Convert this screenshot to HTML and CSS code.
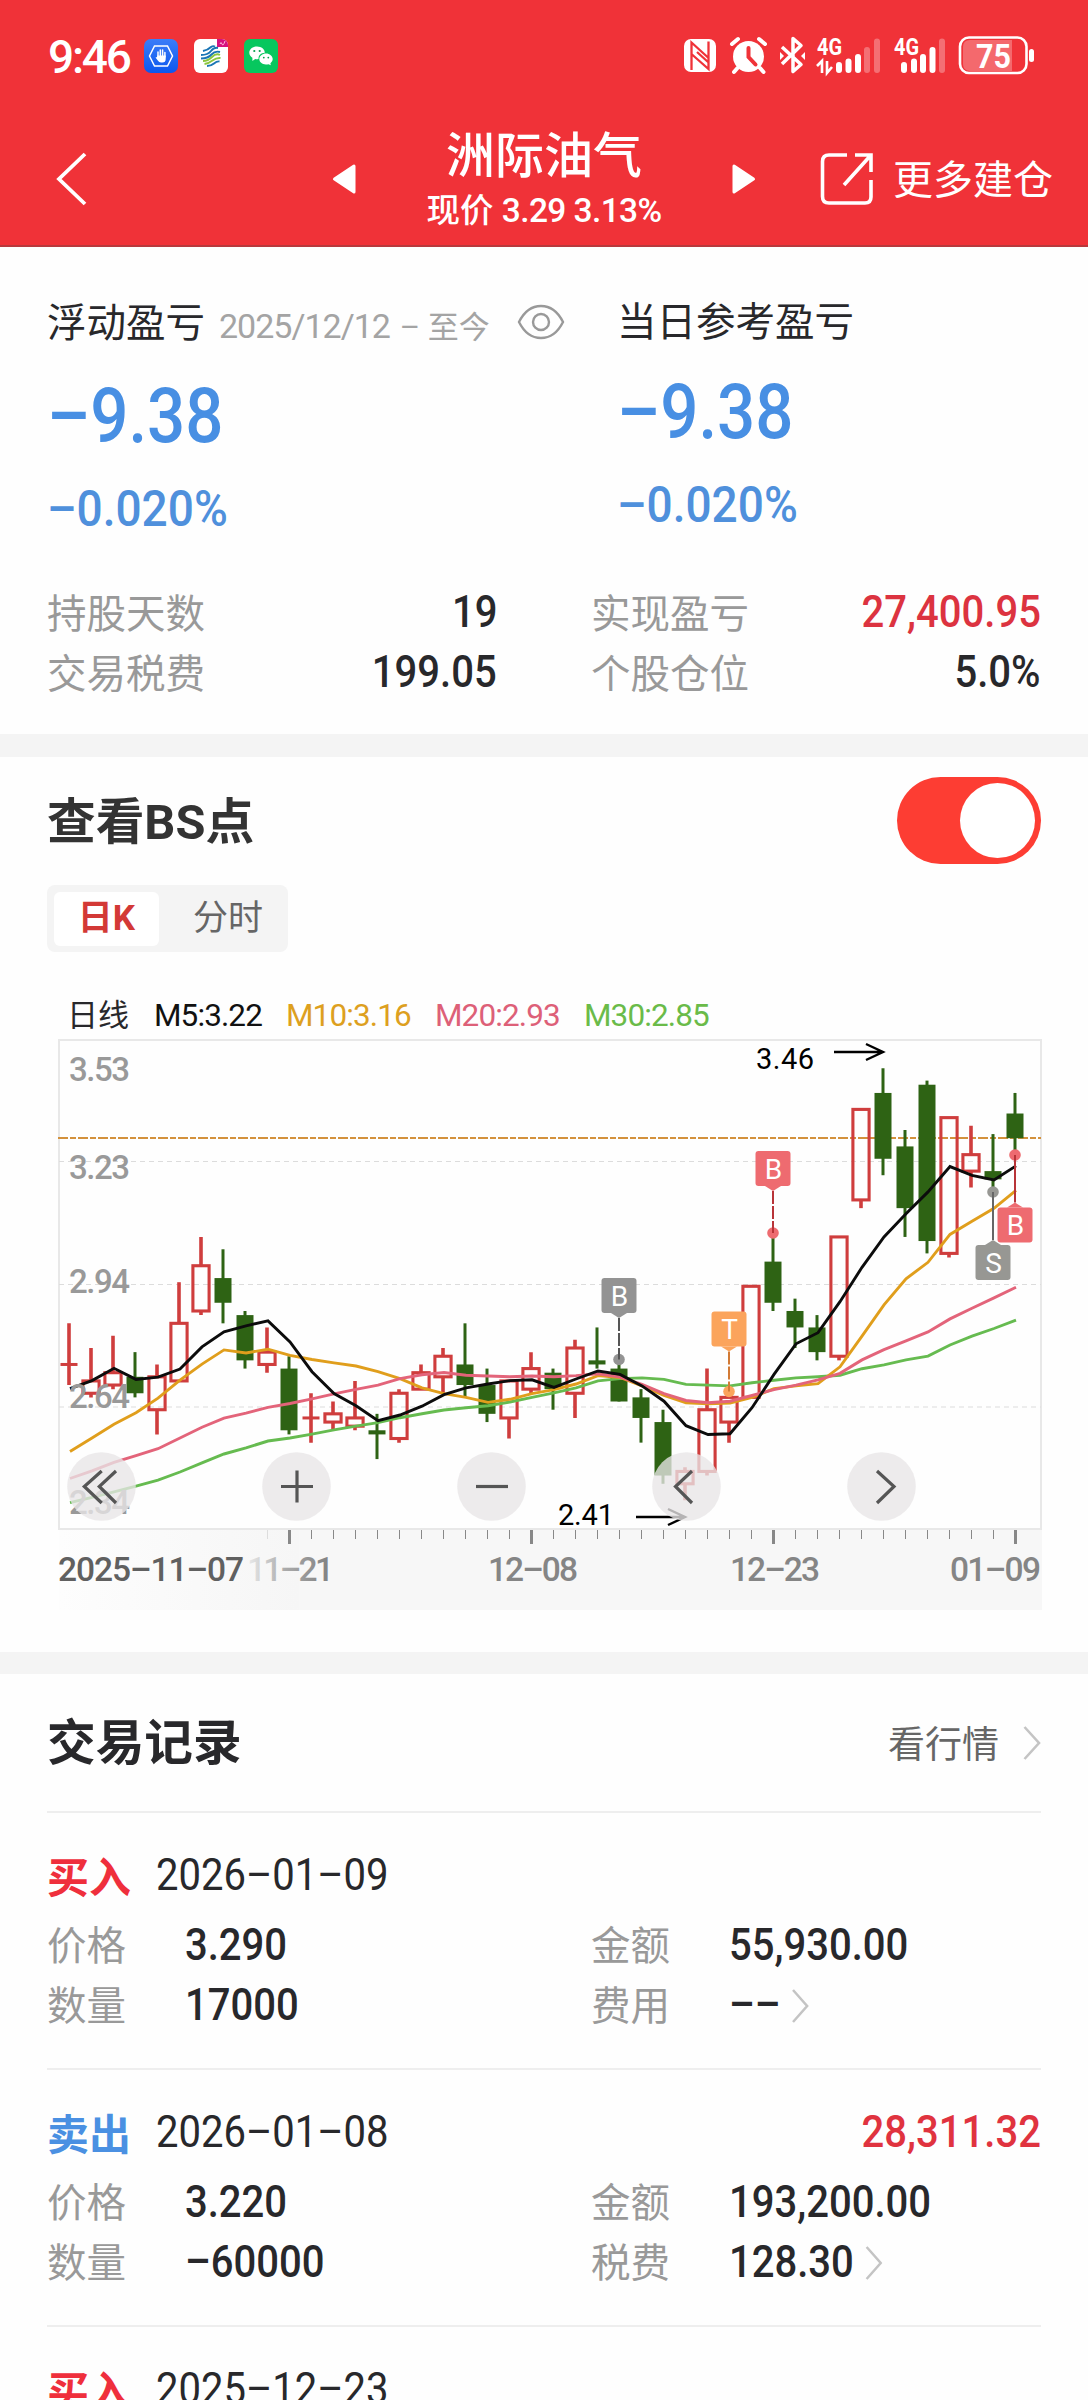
FILE: index.html
```html
<!DOCTYPE html>
<html lang="zh-CN">
<head>
<meta charset="utf-8">
<title>洲际油气</title>
<link rel="stylesheet" href="styles.css">
</head>
<body>
<header class="top">
  <div class="status">
    <span class="clock">9:46</span>
    <div class="apps">
      <svg width="34" height="34" viewBox="0 0 34 34"><defs><linearGradient id="gb" x1="0" y1="0" x2="0" y2="1"><stop offset="0" stop-color="#3c7df8"/><stop offset="1" stop-color="#0b57ee"/></linearGradient></defs><rect width="34" height="34" rx="7" fill="url(#gb)"/><path d="M10.5 7h13l5 10-5 10h-13l-5-10z" fill="none" stroke="#fff" stroke-width="1.5"/><path d="M14 18v-5M16.300 17v-6M18.600 17v-6M20.900 18v-4.500" stroke="#fff" stroke-width="1.500" stroke-linecap="round"/><path d="M13.200 16.500h8.500v3.500q0 3.500-3.500 3.500h-1.200q-2 0-3.200-2l-2.300-3 1.700-.5z" fill="#fff"/></svg>
      <svg width="34" height="34" viewBox="0 0 34 34"><rect width="34" height="34" rx="6" fill="#fff"/><path d="M23 0h5a6 6 0 0 1 6 6v2H23z" fill="#d6127e"/><path d="M26 5q1-3 2 0t3-3" stroke="#fbd" fill="none"/><g fill="none" stroke-width="1.900"><path d="M7 16q7 0 10-4t7-3" stroke="#1a75b5"/><path d="M9 12q5-1 8-4 2-1.500 4-.5" stroke="#1a75b5"/><path d="M7 19.500q7 0 10.500-4T26 13" stroke="#1a75b5"/><path d="M9 22q5 0 9-4t8-2" stroke="#8cc63f"/><path d="M10.500 25q4-.5 8-3.500t8-2.500" stroke="#8cc63f"/><path d="M13 27q4 0 7-2.500t5.500-2" stroke="#1a75b5"/></g></svg>
      <svg width="34" height="34" viewBox="0 0 34 34"><rect width="34" height="34" rx="6" fill="#07c75e"/><path d="M13 7.500c4.500 0 7.800 2.800 7.800 6.300-4 .2-6.500 2.700-6.300 6.200q-1.500.3-3.300-.1L8.400 22v-3.200C6.500 17.600 5.300 15.800 5.300 13.800c0-3.500 3.300-6.300 7.700-6.300z" fill="#fff"/><path d="M22 14.600c3.700 0 6.700 2.500 6.700 5.500 0 1.700-.9 3.200-2.300 4.200l.4 2-2.300-1.100c-5 1.400-9.200-1.400-9.200-5.100 0-3 3-5.500 6.700-5.500z" fill="#fff"/><g fill="#07a04e"><circle cx="10.300" cy="12" r="1.100"/><circle cx="15.700" cy="12" r="1.100"/><circle cx="19.800" cy="18.600" r=".9"/><circle cx="24.300" cy="18.600" r=".9"/></g></svg>
    </div>
    <div class="signals">
      <svg width="356" height="42" viewBox="682 36 356 42">
        <rect x="684" y="40" width="32" height="33" rx="7" fill="#fff"/>
        <path d="M691.500 71V43.500l16.500 15M708.500 42.500V70L692 55.500M697 53l11 10" fill="none" stroke="#f03238" stroke-width="2.300"/>
        <circle cx="748.500" cy="57.500" r="15.500" fill="#fff"/>
        <path d="M732 45l6-5M765 45l-6-5M737.500 69l-3.500 4M760 69l3.500 4" stroke="#fff" stroke-width="4" stroke-linecap="round"/>
        <path d="M748.500 49v9l7 7.500" stroke="#f03238" stroke-width="4" fill="none" stroke-linecap="round"/>
        <path d="M782 48l19 17.500-8 7v-33l8 7L782 65" fill="none" stroke="#fff" stroke-width="3.500" stroke-linejoin="round"/>
        <path d="M780 53l4 4-4 4zM805 53l-4 4 4 4z" fill="#fff"/>
        <g class="net"><text x="817" y="56" textLength="25" lengthAdjust="spacingAndGlyphs">4G</text><text x="894" y="56" textLength="25" lengthAdjust="spacingAndGlyphs">4G</text></g>
        <path d="M817 67l5-5v12M827 62v12l5-6" fill="none" stroke="#fff" stroke-width="2.600"/>
        <g stroke="#fff" stroke-width="6" stroke-linecap="round">
          <path d="M839 66v5M848.500 62.500v8.500M858 58v13M904 66v5M914 62.500v8.500M923 58v13M932.500 51v20"/>
          <path d="M867 51v20M877 42.500v28.500M942 42.500v28.500" stroke-opacity=".3"/>
        </g>
        <rect x="960" y="38.500" width="66.500" height="35.500" rx="9" fill="none" stroke="#fff" stroke-width="2.600"/>
        <path d="M970 41h42v31h-42q-7 0-7-7V48q0-7 7-7z" fill="#fff" fill-opacity=".27"/>
        <rect x="1029" y="50" width="5" height="13" rx="2.500" fill="#fff"/>
        <text class="batt" x="976" y="69" textLength="35" lengthAdjust="spacingAndGlyphs">75</text>
      </svg>
    </div>
  </div>
  <nav class="bar">
    <svg class="back" width="34" height="56" viewBox="0 0 34 56"><path d="M31 3L5 28l26 25" fill="none" stroke="#fff" stroke-width="3.800"/></svg>
    <svg class="prev" width="24" height="32" viewBox="0 0 24 32"><path d="M22 3v26L2.500 16z" fill="#fff" stroke="#fff" stroke-width="3" stroke-linejoin="round"/></svg>
    <div class="title"><h1>洲际油气</h1><p>现价 <span>3.29 3.13%</span></p></div>
    <svg class="next" width="24" height="32" viewBox="0 0 24 32"><path d="M2 3v26l19.500-13z" fill="#fff" stroke="#fff" stroke-width="3" stroke-linejoin="round"/></svg>
    <div class="more">
      <svg width="54" height="54" viewBox="0 0 54 54"><path d="M27 3H9q-6.500 0-6.500 6.500v35Q2.500 51 9 51h36q6 0 6-6V28M35 3h16v17M51 3L24 33" fill="none" stroke="#fff" stroke-width="3.600"/></svg>
      <span>更多建仓</span>
    </div>
  </nav>
</header>

<section class="summary">
  <div class="pnl">
    <div class="col">
      <div class="cap"><span>浮动盈亏</span><small><span class="since">2025/12/12</span> – 至今</small>
        <svg width="48" height="36" viewBox="0 0 48 36"><path d="M2 18Q10 2 24 2t22 16Q38 34 24 34T2 18z" fill="none" stroke="#999" stroke-width="2.400"/><circle cx="24" cy="18" r="8" fill="none" stroke="#999" stroke-width="2.400"/></svg></div>
      <div class="big">–9.38</div>
      <div class="pct">–0.020%</div>
    </div>
    <div class="col day">
      <div class="cap"><span>当日参考盈亏</span></div>
      <div class="big">–9.38</div>
      <div class="pct">–0.020%</div>
    </div>
  </div>
  <dl class="stats">
    <div><dt>持股天数</dt><dd>19</dd></div>
    <div><dt>实现盈亏</dt><dd class="red">27,400.95</dd></div>
    <div><dt>交易税费</dt><dd>199.05</dd></div>
    <div><dt>个股仓位</dt><dd>5.0%</dd></div>
  </dl>
</section>

<section class="chart-card">
  <div class="head"><h2>查看BS点</h2><span class="toggle"><i></i></span></div>
  <div class="tabs"><b>日K</b><span>分时</span></div>
  <div class="legend"><span class="l0">日线</span><span class="l5">M5:3.22</span><span class="l10">M10:3.16</span><span class="l20">M20:2.93</span><span class="l30">M30:2.85</span></div>
  <svg id="chart" width="994" height="580" viewBox="55 1036 994 580"></svg>
</section>

<section class="trades">
  <div class="thead"><h2>交易记录</h2><span>看行情</span><svg class="chev" width="18" height="34" viewBox="0 0 18 34"><path d="M1.500 1L16 17 1.500 33" fill="none" stroke="#c4c4c4" stroke-width="2.600"/></svg></div>
  <article>
    <div class="trow"><b class="buy">买入</b><time>2026–01–09</time></div>
    <dl><dt>价格</dt><dd>3.290</dd><dt>金额</dt><dd>55,930.00</dd>
    <dt>数量</dt><dd>17000</dd><dt>费用</dt><dd>–– <svg class="chev" width="19" height="34" viewBox="0 0 18 34" preserveAspectRatio="none"><path d="M1.500 1L16 17 1.500 33" fill="none" stroke="#c4c4c4" stroke-width="2.600"/></svg></dd></dl>
  </article>
  <article>
    <div class="trow"><b class="sell">卖出</b><time>2026–01–08</time><em>28,311.32</em></div>
    <dl><dt>价格</dt><dd>3.220</dd><dt>金额</dt><dd>193,200.00</dd>
    <dt>数量</dt><dd>–60000</dd><dt>税费</dt><dd>128.30 <svg class="chev" width="19" height="34" viewBox="0 0 18 34" preserveAspectRatio="none"><path d="M1.500 1L16 17 1.500 33" fill="none" stroke="#c4c4c4" stroke-width="2.600"/></svg></dd></dl>
  </article>
  <article>
    <div class="trow"><b class="buy">买入</b><time>2025–12–23</time></div>
  </article>
</section>
<script src="chart.js"></script>
</body>
</html>
```
FILE: styles.css
```css
* { box-sizing: border-box; margin: 0; padding: 0; }
html, body { height: 2400px; overflow: hidden; }
body {
  width: 1088px;
  background: #fefefe;
  color: #28282b;
  font-family: Roboto, "Noto Sans CJK SC", sans-serif;
}
svg { display: block; flex: none; }
h1, h2, p, dt, dd, span, b { white-space: nowrap; }

.top { height: 247px; background: #f03238; color: #fff; border-bottom: 2px solid #b8393d; }
.status { display: flex; height: 112px; padding-left: 48px; align-items: center; }
.clock { width: 96px; font-size: 46px; line-height: 50px; letter-spacing: -2.2px; font-weight: 500; padding-top: 2px; }
.apps { display: flex; gap: 16px; }
.signals { margin-left: 404px; }
.net text { font-size: 23px; font-weight: 700; fill: #fff; }
.batt { font-size: 33px; font-weight: 700; fill: #fff; }

.bar { display: flex; height: 133px; align-items: center; padding-left: 54px; }
.prev { margin-left: 244px; }
.title { width: 376px; text-align: center; padding-top: 7px; }
.title h1 { font-size: 49px; line-height: 58px; font-weight: 500; }
.title p { font-size: 33.5px; line-height: 50px; font-weight: 500; }
.title p span { letter-spacing: -.6px; }
.more { display: flex; align-items: center; margin-left: 64px; gap: 19px; font-size: 40px; }
.more span { padding-bottom: 4px; }

.summary { height: 487px; padding: 53px 47px 0; }
.pnl { display: grid; grid-template-columns: 570px 1fr; height: 284px; }
.cap { display: flex; align-items: center; height: 44px; font-size: 39.5px; }
.cap > span { padding-bottom: 5px; }
.cap small { margin-left: 14px; width: 298px; font-size: 31px; color: #a4a4a4; padding-top: 5px; }
.since { font-size: 34px; letter-spacing: -1px; margin-right: 2px; }
.big, .pct, time, article dd { transform-origin: left; }
.big { margin-top: 34px; height: 76px; line-height: 76px; font-size: 76px; font-weight: 500; color: #488fe3; transform: scaleX(.885); }
.pct { margin-top: 30px; height: 50px; line-height: 50px; font-size: 50px; font-weight: 500; color: #4f90dc; transform: scaleX(.92); }
.day { margin-top: -1px; }
.day .big { margin-top: 31px; }
.stats { display: grid; grid-template-columns: 450px 450px; column-gap: 94px; grid-auto-rows: 60px; }
.stats div { display: flex; justify-content: space-between; align-items: center; }
dt { font-size: 39.5px; color: #999; padding-bottom: 7px; }
dd { font-size: 43.5px; font-weight: 500; padding-bottom: 4px; transform: scaleX(.92); }
.stats dd, .trow em { transform-origin: right; }
.red { color: #dc3340; }

.chart-card { height: 918px; border-top: 23px solid #f4f4f4; padding: 20px 47px 0; }
.head { display: flex; justify-content: space-between; height: 87px; align-items: center; }
h2 { font-size: 48.700px; line-height: 60px; font-weight: 700; }
.head h2 { color: #333; padding-top: 4px; }
.toggle { width: 144px; height: 87px; border-radius: 44px; background: #fd3d33; display: flex; justify-content: flex-end; padding: 6px; }
.toggle i { width: 75px; height: 75px; border-radius: 50%; background: #fff; }
.tabs { display: flex; align-items: center; width: 241px; height: 67px; margin-top: 21px; background: #f4f4f4; border-radius: 8px; padding: 7px; font-size: 35px; line-height: 54px; }
.tabs b { width: 105px; background: #fff; border-radius: 6px; text-align: center; color: #d33936; }
.tabs span { flex: 1; padding-left: 34px; color: #666; }
.legend { display: flex; height: 40px; margin-top: 44px; padding-left: 20px; line-height: 40px; font-size: 31.5px; letter-spacing: -.9px; }
.l0 { width: 87px; font-size: 31px; letter-spacing: 0; }
.l5 { width: 132px; color: #111; }
.l10 { width: 149px; color: #dda01f; }
.l20 { width: 149px; color: #dd6078; }
.l30 { color: #6abb49; }
#chart { margin: 0 0 0 8px; }
#chart text { font-family: Roboto, sans-serif; }
.ylab text { font-size: 33px; font-weight: 500; fill: #999; }
.xlab text { font-size: 33.5px; font-weight: 500; fill: #858585; }
.note text { font-size: 29px; fill: #000; }
.tag text { font-size: 28px; fill: #fff; text-anchor: middle; }

.trades { border-top: 22px solid #f4f4f4; padding: 0 47px; height: 748px; overflow: hidden; }
.thead { display: flex; height: 137px; align-items: center; }
.thead h2 { padding-top: 2px; }
.thead span { margin: 0 24px 0 auto; font-size: 37px; color: #666; padding-bottom: 1px; }
article { height: 257px; border-top: 2px solid #eee; padding-top: 35px; }
.trow { display: flex; height: 54px; align-items: center; font-size: 42px; }
.trow b { width: 109px; padding-bottom: 2px; }
.trow time { font-size: 43.5px; transform: scaleX(.92); }
.trow em { margin-left: auto; font-style: normal; font-size: 43.5px; font-weight: 500; color: #e0333f; transform: scaleX(.92); }
.buy { color: #ef2f3c; }
.sell { color: #4a90e2; }
article dl { display: grid; grid-template-columns: 138px 406px 138px 1fr; grid-auto-rows: 60px; align-items: center; margin-top: 14px; }
article dd { display: flex; align-items: center; gap: 12px; padding-bottom: 1px; }
```
FILE: chart.js
```js
// Daily bars: [open, close, high, low]; a bar with close >= open is drawn hollow red.
const bars = [
  [2.74,2.74,2.84,2.69],[2.67,2.70,2.78,2.66],[2.69,2.72,2.81,2.68],[2.71,2.67,2.77,2.66],
  [2.63,2.71,2.74,2.57],[2.70,2.84,2.94,2.70],[2.87,2.98,3.05,2.86],[2.95,2.89,3.02,2.84],
  [2.86,2.75,2.87,2.73],[2.74,2.77,2.83,2.72],[2.73,2.58,2.76,2.57],[2.61,2.61,2.67,2.55],
  [2.60,2.62,2.65,2.58],[2.59,2.61,2.70,2.58],[2.58,2.57,2.62,2.51],[2.56,2.67,2.68,2.55],
  [2.68,2.72,2.74,2.68],[2.71,2.76,2.78,2.67],[2.74,2.69,2.84,2.66],[2.69,2.62,2.73,2.60],
  [2.61,2.70,2.70,2.56],[2.68,2.73,2.77,2.67],[2.72,2.68,2.73,2.63],[2.67,2.78,2.80,2.61],
  [2.75,2.74,2.83,2.73],[2.73,2.65,2.75,2.65],[2.66,2.61,2.68,2.55],[2.60,2.47,2.63,2.45],
  [2.45,2.48,2.49,2.41],[2.48,2.63,2.73,2.47],[2.60,2.66,2.68,2.55],[2.66,2.93,2.93,2.66],
  [2.99,2.89,3.06,2.87],[2.87,2.83,2.90,2.78],[2.83,2.77,2.86,2.75],[2.76,3.05,3.05,2.75],
  [3.14,3.36,3.36,3.12],[3.40,3.24,3.46,3.20],[3.27,3.12,3.31,3.05],[3.42,3.04,3.43,3.01],
  [3.01,3.34,3.34,3.00],[3.21,3.25,3.32,3.17],[3.21,3.19,3.30,3.16],[3.35,3.29,3.40,3.25]
];
// Averages, as distance below 3.553 in 1/1075 yuan.
const averages = {
  '#66bb50': [1235,1221,1207,1192,1176,1155,1131,1108,1092,1074,1066,1056,1045,1035,1026,1013,1003,993,987,982,972,960,948,935,917,911,909,913,926,928,930,922,915,909,906,902,885,875,862,852,823,800,780,758],
  '#e09e1c': [1101,1066,1030,1000,962,915,873,836,844,834,850,861,870,878,893,911,935,950,960,973,965,950,940,925,903,908,930,955,974,977,975,960,937,930,924,880,800,718,650,607,534,500,466,419],
  '#e3647a': [1172,1152,1130,1112,1094,1066,1038,1014,1001,986,976,964,951,939,928,911,901,895,902,904,906,904,906,903,898,907,926,950,968,974,970,955,940,928,914,897,862,835,812,789,755,727,700,672],
  '#0c0c0c': [937,916,884,913,907,886,828,789,773,760,815,893,950,982,1021,1006,983,953,935,925,916,914,934,912,891,900,930,970,1034,1057,1055,987,900,820,791,710,620,541,480,423,357,380,392,355]
};
const PX = 411.4;
const x = i => 69 + 22 * i;
const y = p => 1030 + (3.553 - p) * PX;
const ya = v => 1030 + v * PX / 1075;
let s = '';
s += `<defs>
<linearGradient id="fade" x1="0" x2="1" y1="0" y2="0"><stop offset="0" stop-color="#fdfdfd"/><stop offset="1" stop-color="#f6f6f6"/></linearGradient>
<linearGradient id="lab" gradientUnits="userSpaceOnUse" x1="246" x2="325" y1="0" y2="0"><stop offset="0" stop-color="#ececec"/><stop offset=".5" stop-color="#aaa"/><stop offset="1" stop-color="#858585"/></linearGradient></defs>
<rect x="59" y="1530" width="240" height="80" fill="url(#fade)"/><rect x="299" y="1530" width="743" height="80" fill="#f7f7f7"/>
<rect x="59" y="1040" width="982" height="489" fill="#fefefe" stroke="#e8e8e8" stroke-width="2"/>`;
s += `<path d="M59 1161.500H1041M59 1284.500H1041M59 1407H1041" stroke="#dcdcdc" stroke-width="1.200" stroke-dasharray="5 4"/>`;
s += `<path d="M58 1138H1041" stroke="#d3913c" stroke-width="2" stroke-dasharray="10 2 6 2"/>`;
bars.forEach(([o, c, h, l], i) => {
  const up = c >= o, t = y(Math.max(o, c)), b = y(Math.min(o, c)), X = x(i);
  if (up) {
    s += `<path d="M${X} ${y(h)}V${t}M${X} ${b}V${y(l)}" stroke="#cf3d3d" stroke-width="3.600"/>`;
    s += t === b ? `<path d="M${X - 8.500} ${t}h17" stroke="#cf3d3d" stroke-width="3"/>`
      : `<rect x="${X - 8.100}" y="${t}" width="16.200" height="${b - t}" fill="none" stroke="#cf3d3d" stroke-width="3.100"/>`;
  } else {
    s += `<path d="M${X} ${y(h)}V${y(l)}" stroke="#2e6314" stroke-width="3"/><rect x="${X - 8.500}" y="${t}" width="17" height="${b - t}" fill="#2e6314"/>`;
  }
});
for (const [color, vals] of Object.entries(averages))
  s += `<polyline fill="none" stroke="${color}" stroke-width="2.900" points="${vals.map((v, i) => x(i) + 1 + ',' + ya(v).toFixed(1)).join(' ')}"/>`;
s += '<g class="ylab">' + [['3.53',1081],['3.23',1179],['2.94',1293],['2.64',1408],['2.34',1514]].map(([t, Y]) => `<text x="69" y="${Y}" textLength="61">${t}</text>`).join('') + '</g>';
s += `<g class="note"><text x="756" y="1069" textLength="58">3.46</text><text x="558" y="1525" textLength="56">2.41</text></g>
<path d="M834 1052h48M866 1044l17 8-17 8M636 1517h48M668 1509l17 8-17 8" fill="none" stroke="#000" stroke-width="2.400"/>`;
// Trade tags; dir 1 hangs the tag over its dot, -1 puts it below.
const tag = (X, dot, top, dir, letter, fill, line) => {
  const edge = dir > 0 ? top + 35 : top, tip = edge + dir * 5;
  return `<g class="tag"><circle cx="${X}" cy="${dot}" r="5.800" fill="${fill}"/><path d="M${X} ${tip}V${dot}" stroke="${line}" stroke-width="2" ${dir > 0 ? 'stroke-dasharray="13 2"' : ''}/><rect x="${X - 17.500}" y="${top}" width="35" height="35" rx="3" fill="${fill}"/><path d="M${X - 8} ${edge}h16L${X} ${tip}z" fill="${fill}"/><text x="${X + .5}" y="${top + 27.500}">${letter}</text></g>`;
};
s += tag(619,1359.5,1278,1,'B','#939393','#555') + tag(729,1391.5,1311.5,1,'T','#fba45c','#d27a35')
  + tag(773,1233,1151,1,'B','#ee6b70','#b83438') + tag(993,1192,1245,-1,'S','#979793','#666') + tag(1015,1155,1207.5,-1,'B','#ee6b70','#b83438');
for (let i = 9; i < 44; i++) {
  const major = (i - 10) % 11 === 0;
  s += `<path d="M${x(i) + .500} 1530v${major ? 14 : 9}" stroke="${i === 9 ? '#ddd' : '#888'}" stroke-width="${major ? 3 : 1}"/>`;
}
s += `<g class="xlab"><text x="58" y="1581" textLength="186" style="fill:#606060">2025–11–07</text><text x="247" y="1581" textLength="87" style="fill:url(#lab)">11–21</text><text x="488" y="1581" textLength="90">12–08</text><text x="730" y="1581" textLength="90">12–23</text><text x="950" y="1581" textLength="91">01–09</text></g>`;
const icons = ['M101.700 1471L84.300 1486.500 101.700 1503M116 1471L99.300 1486.500 116 1503','M281 1486.500h32M297 1470.500v32','M476 1486.500h32','M692 1471l-16.500 15.500L692 1503','M877 1471l17 15.500-17 16.500'];
icons.forEach((d, i) => {
  s += `<circle cx="${101.5 + 195 * i}" cy="1486.500" r="34.300" fill="#e8e6e7" fill-opacity=".78"/><path d="${d}" fill="none" stroke="#555" stroke-width="3.200"/>`;
});
document.getElementById('chart').innerHTML = s;
```
